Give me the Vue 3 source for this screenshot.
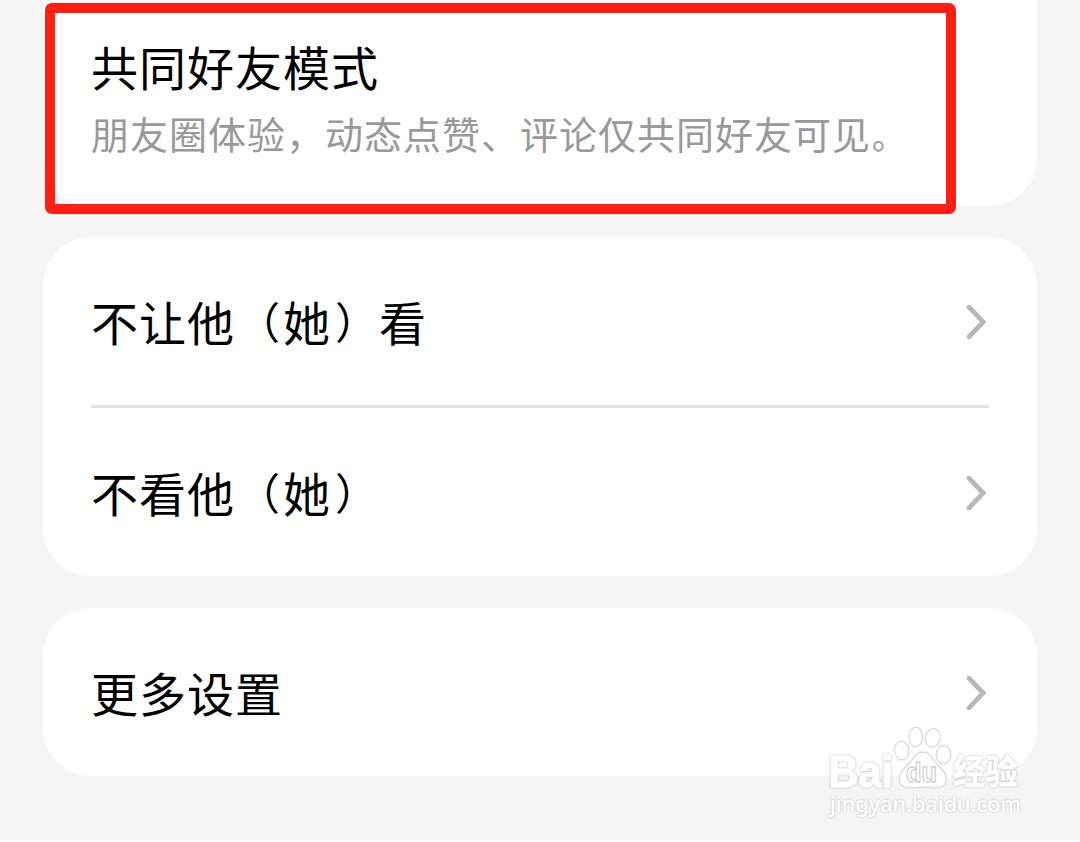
<template>
  <div class="settings-page">
    <section class="card mode-card">
      <h3 class="title">共同好友模式</h3>
      <p class="description">朋友圈体验，动态点赞、评论仅共同好友可见<span class="full-stop">。</span></p>
      <div class="highlight"></div>
    </section>

    <section v-for="(group, index) in groups" :key="index" class="card">
      <div v-for="item in group" :key="item" class="row">
        <span class="title">
          <span v-for="(char, i) in item" :key="i" :class="{ 'paren-open': char === '（', 'paren-close': char === '）' }">{{ char }}</span>
        </span>
        <svg class="chevron" viewBox="0 0 24 38" fill="none" stroke="#b5b7bd" stroke-width="4.8" stroke-linecap="round" stroke-linejoin="miter"><path d="M4 4.200L18.200 19L4 33.800"/></svg>
      </div>
    </section>

    <svg class="watermark" viewBox="0 0 210 100">
      <text class="logo" x="8.500" y="66.500" font-size="44" textLength="64.500" lengthAdjust="spacingAndGlyphs">Bai</text>
      <g fill="#fff" stroke="#dadada" stroke-width="1.3">
        <ellipse cx="81.700" cy="30.500" rx="7.300" ry="9.300" transform="rotate(-8 81.700 30.500)"/>
        <ellipse cx="95.700" cy="17" rx="6.800" ry="9.800"/>
        <ellipse cx="112.700" cy="18" rx="7.400" ry="9.400" transform="rotate(14 112.700 18)"/>
        <ellipse cx="123.500" cy="34.700" rx="7.400" ry="9.200"/>
        <path d="M102.500 32C95.500 32 93.500 38 90 42.500C85.500 48 79.300 51 79.300 58.500C79.300 65.500 84.500 68.500 91 67.800C97 67 108 67 114 67.800C121.500 68.500 126.300 65.500 126.300 58.500C126.300 51 120 48 115.500 42.500C112 38 109.500 32 102.500 32Z"/>
      </g>
      <text class="du" x="86" y="62" font-size="27" textLength="31" lengthAdjust="spacingAndGlyphs">du</text>
      <text class="logo cn" x="133" y="64" font-size="34" textLength="65" lengthAdjust="spacingAndGlyphs">经验</text>
      <text class="url" x="10" y="92" font-size="22.500" textLength="191" lengthAdjust="spacingAndGlyphs">jingyan.baidu.com</text>
    </svg>
  </div>
</template>

<script setup>
const groups = [
  ['不让他（她）看', '不看他（她）'],
  ['更多设置'],
];
</script>

<style>
body {
  margin: 0;
  background-color: #fff;
}
</style>

<style scoped>
.settings-page {
  position: relative;
  box-sizing: border-box;
  height: 841px;
  padding: 0 43.5px 0 43px;
  overflow: hidden;
  background-color: #f5f5f5;
  font-family: "Noto Sans CJK SC", sans-serif;
}

.card {
  padding: 0 48px;
  margin-bottom: 32px;
  border-radius: 48px;
  background-color: #fff;
}

.mode-card {
  position: relative;
  box-sizing: border-box;
  height: 206px;
  padding-top: 31px;
  margin-bottom: 31px;
  border-radius: 0 0 48px 48px;
}

.title {
  display: flex;
  margin: 0;
  font-size: 47px;
  font-weight: 400;
  line-height: 70px;
  letter-spacing: 1px;
  color: #000;
}

.row .title {
  padding-bottom: 1px;
}

/* Brackets are a little smaller than the characters around them */
.paren-open,
.paren-close {
  box-sizing: border-box;
  width: 48px;
  padding-left: 2px;
  font-size: 43px;
  line-height: 69px;
}

.paren-close {
  padding-left: 4px;
}

.description {
  margin: 4px 0 0;
  font-size: 38px;
  line-height: 56px;
  letter-spacing: 1px;
  color: #999;
  white-space: nowrap;
}

.full-stop {
  padding-left: 1px;
  font-size: 33px;
  line-height: 1;
}

.highlight {
  position: absolute;
  top: 2.5px;
  left: 1.5px;
  box-sizing: border-box;
  width: 911px;
  height: 211px;
  border: 10px solid #ff1e12;
  border-radius: 7px;
}

.row {
  display: flex;
  justify-content: space-between;
  align-items: center;
  height: 168px;
}

.row + .row {
  border-top: 3px solid #e3e3e3;
}

.chevron {
  width: 24px;
  height: 38px;
  margin-top: 2px;
}

/* Watermark floats over the bottom right corner */
.watermark {
  position: absolute;
  top: 720px;
  left: 820px;
  width: 210px;
  height: 100px;
}

.logo {
  font-family: "Liberation Sans", sans-serif;
  font-weight: 700;
  fill: #fff;
  stroke: #fff;
  stroke-width: 1.4;
  stroke-linejoin: round;
  filter: drop-shadow(0 0 0.8px #b4b4b4);
}

.cn {
  font-family: "Noto Sans CJK SC", sans-serif;
  stroke-width: 0.6;
}

.du {
  font-family: "Liberation Sans", sans-serif;
  font-weight: 700;
  fill: #fff;
  stroke: #d2d2d2;
  stroke-width: 1.3;
}

.url {
  font-family: "Noto Sans", sans-serif;
  font-weight: 500;
  fill: #fff;
  filter: drop-shadow(0 0 0.8px #b8b8b8);
}
</style>
